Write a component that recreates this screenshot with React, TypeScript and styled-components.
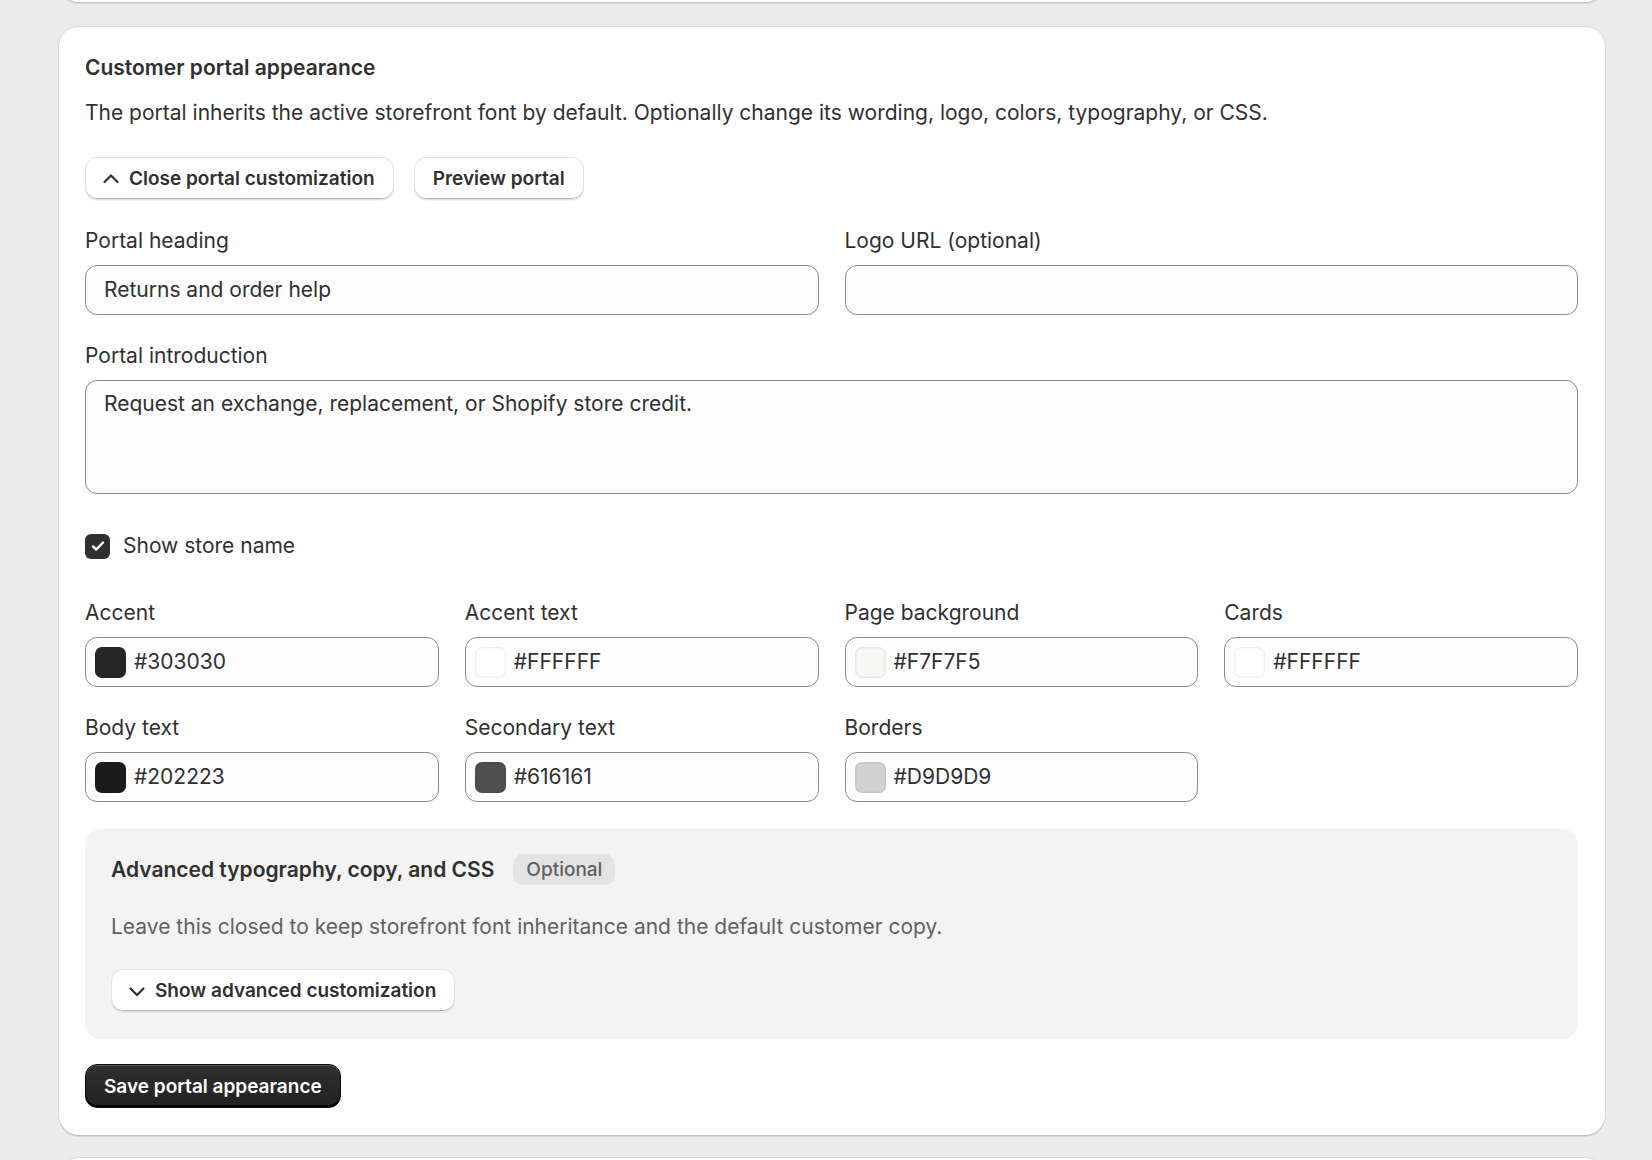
import styled, { createGlobalStyle } from 'styled-components';

const GlobalStyle = createGlobalStyle`
  html, body {
    margin: 0;
    padding: 0;
    background: #ebebeb;
  }
  body {
    font-family: Inter, "Noto Sans", "Liberation Sans", sans-serif;
    color: #303030;
    -webkit-font-smoothing: antialiased;
  }
`;

const Page = styled.div`
  display: flex;
  flex-direction: column;
  gap: 23px;
  padding: 0 47px 0 59px;
  height: 1160px;
  overflow: hidden;
  box-sizing: border-box;
`;

const Card = styled.section`
  background: #ffffff;
  border-radius: 20px;
  box-shadow: 0 0 0 1px rgba(0, 0, 0, 0.07), 0 2px 1px rgba(0, 0, 0, 0.1);
  box-sizing: border-box;
  flex-shrink: 0;
`;

const StubCard = styled(Card)`
  height: 40px;
  margin-top: -38px;
`;

const MainCard = styled(Card)`
  display: flex;
  flex-direction: column;
  margin-top: 2px;
  padding: 27px 27px 27px 26px;
`;

const Heading = styled.h2`
  margin: 0;
  font-size: 21px;
  line-height: 28px;
  font-weight: 600;
`;

const Description = styled.p<{ $muted?: boolean }>`
  margin: ${(p) => (p.$muted ? '0' : '17px 0 0')};
  font-size: 21px;
  line-height: 28px;
  font-weight: 400;
  color: ${(p) => (p.$muted ? '#616161' : '#303030')};
`;

const ButtonRow = styled.div`
  display: flex;
  gap: 20px;
  margin-top: 30px;
`;

const Button = styled.button`
  display: inline-flex;
  align-items: center;
  gap: 7px;
  height: 43px;
  padding: 0 18px;
  background: #ffffff;
  border: 1px solid #e3e3e3;
  border-radius: 12px;
  box-shadow: inset 0 -1px 0 #b5b5b5, 0 1px 0 rgba(0, 0, 0, 0.05);
  font-family: inherit;
  font-size: 19px;
  font-weight: 600;
  color: #303030;
  cursor: pointer;
  box-sizing: border-box;
`;

const IconButton = styled(Button)`
  padding-left: 14px;
`;

const PrimaryButton = styled(Button)`
  align-self: flex-start;
  height: 44px;
  padding: 0 18px;
  margin-top: 25px;
  color: #ffffff;
  border: 1px solid #0c0c0c;
  background: linear-gradient(180deg, #303030 0%, #212121 100%);
  box-shadow: inset 0 1px 0 rgba(255, 255, 255, 0.2), inset 0 -2px 0 #000;
`;

const Grid = styled.div<{ $cols: number; $top: number }>`
  display: grid;
  grid-template-columns: repeat(${(p) => p.$cols}, 1fr);
  column-gap: 26px;
  row-gap: 27px;
  margin-top: ${(p) => p.$top}px;
`;

const Field = styled.label<{ $span?: number }>`
  display: flex;
  flex-direction: column;
  gap: 10px;
  grid-column: span ${(p) => p.$span ?? 1};
`;

const Label = styled.span`
  font-size: 21px;
  line-height: 28px;
  color: #303030;
`;

const InputBox = styled.div<{ $tall?: boolean }>`
  display: flex;
  align-items: ${(p) => (p.$tall ? 'flex-start' : 'center')};
  gap: 8px;
  height: ${(p) => (p.$tall ? '114px' : '50px')};
  padding: ${(p) => (p.$tall ? '9px 18px' : '0 18px')};
  background: #fdfdfd;
  border: 1px solid #8a8a8a;
  border-radius: 12px;
  box-sizing: border-box;
  font-size: 21px;
  line-height: 28px;
  color: #303030;
`;

const ColorBox = styled(InputBox)`
  padding: 0 9px;
`;

const Swatch = styled.span<{ $color: string }>`
  width: 31px;
  height: 31px;
  border-radius: 7px;
  background: ${(p) => p.$color};
  box-shadow: inset 0 0 0 1.5px rgba(0, 0, 0, 0.06);
  flex-shrink: 0;
`;

const CheckRow = styled.label`
  display: flex;
  align-items: center;
  gap: 13px;
  margin-top: 38px;
  font-size: 21px;
  line-height: 28px;
`;

const CheckBox = styled.span`
  width: 25px;
  height: 25px;
  border-radius: 6px;
  background: #303030;
  display: inline-flex;
  align-items: center;
  justify-content: center;
`;

const Panel = styled.div`
  display: flex;
  flex-direction: column;
  gap: 28px;
  margin-top: 27px;
  padding: 25px 26px 27px;
  background: #f3f3f3;
  border-radius: 16px;
`;

const PanelTitleRow = styled.div`
  display: flex;
  align-items: center;
  gap: 19px;
`;

const PanelTitle = styled.h3`
  margin: 0;
  font-size: 21px;
  line-height: 28px;
  font-weight: 600;
`;

const Badge = styled.span`
  display: inline-flex;
  align-items: center;
  height: 31px;
  padding: 0 13px;
  border-radius: 10px;
  background: #e3e3e3;
  color: #616161;
  font-size: 19px;
  font-weight: 500;
`;

const Chevron = ({ up }: { up?: boolean }) => (
  <svg width="22" height="22" viewBox="0 0 22 22" fill="none">
    <path
      d={up ? 'M4.5 14 11 7.5l6.5 6.5' : 'M4.5 8.5 11 15l6.5-6.5'}
      stroke="#303030"
      strokeWidth="2.2"
      strokeLinecap="round"
      strokeLinejoin="round"
    />
  </svg>
);

const colors = [
  { label: 'Accent', value: '#303030', swatch: '#262626' },
  { label: 'Accent text', value: '#FFFFFF', swatch: '#FFFFFF' },
  { label: 'Page background', value: '#F7F7F5', swatch: '#F7F7F5' },
  { label: 'Cards', value: '#FFFFFF', swatch: '#FFFFFF' },
  { label: 'Body text', value: '#202223', swatch: '#1c1c1c' },
  { label: 'Secondary text', value: '#616161', swatch: '#4f4f4f' },
  { label: 'Borders', value: '#D9D9D9', swatch: '#d2d2d2' },
];

function App() {
  return (
    <>
      <GlobalStyle />
      <Page>
        <StubCard />
        <MainCard>
          <Heading>Customer portal appearance</Heading>
          <Description>
            The portal inherits the active storefront font by default. Optionally change its
            wording, logo, colors, typography, or CSS.
          </Description>

          <ButtonRow>
            <IconButton>
              <Chevron up />
              Close portal customization
            </IconButton>
            <Button>Preview portal</Button>
          </ButtonRow>

          <Grid $cols={2} $top={27}>
            <Field>
              <Label>Portal heading</Label>
              <InputBox>Returns and order help</InputBox>
            </Field>
            <Field>
              <Label>Logo URL (optional)</Label>
              <InputBox />
            </Field>
            <Field $span={2}>
              <Label>Portal introduction</Label>
              <InputBox $tall>Request an exchange, replacement, or Shopify store credit.</InputBox>
            </Field>
          </Grid>

          <CheckRow>
            <CheckBox>
              <svg width="18" height="18" viewBox="0 0 18 18" fill="none">
                <path
                  d="M4 9.5 7.3 12.5 14 5.5"
                  stroke="#fff"
                  strokeWidth="2.4"
                  strokeLinecap="round"
                  strokeLinejoin="round"
                />
              </svg>
            </CheckBox>
            Show store name
          </CheckRow>

          <Grid $cols={4} $top={39}>
            {colors.map((c) => (
              <Field key={c.label}>
                <Label>{c.label}</Label>
                <ColorBox>
                  <Swatch $color={c.swatch} />
                  {c.value}
                </ColorBox>
              </Field>
            ))}
          </Grid>

          <Panel>
            <PanelTitleRow>
              <PanelTitle>Advanced typography, copy, and CSS</PanelTitle>
              <Badge>Optional</Badge>
            </PanelTitleRow>
            <Description $muted>
              Leave this closed to keep storefront font inheritance and the default customer copy.
            </Description>
            <div>
              <IconButton>
                <Chevron />
                Show advanced customization
              </IconButton>
            </div>
          </Panel>

          <PrimaryButton>Save portal appearance</PrimaryButton>
        </MainCard>
        <Card style={{ height: 40 }} />
      </Page>
    </>
  );
}

export default App;
